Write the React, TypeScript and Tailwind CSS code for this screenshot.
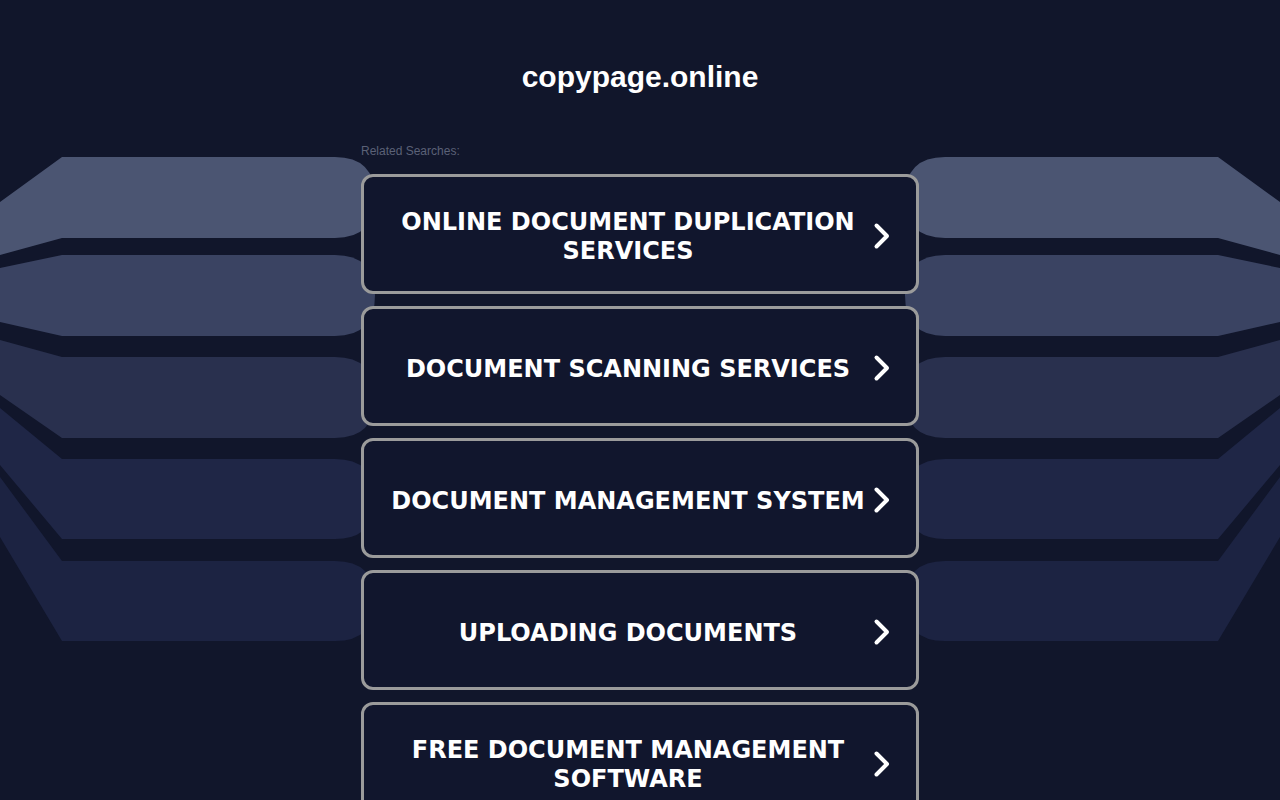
import React from "react";

const items: string[][] = [
  ["ONLINE DOCUMENT DUPLICATION", "SERVICES"],
  ["DOCUMENT SCANNING SERVICES"],
  ["DOCUMENT MANAGEMENT SYSTEM"],
  ["UPLOADING DOCUMENTS"],
  ["FREE DOCUMENT MANAGEMENT", "SOFTWARE"],
];

const bands = [
  { t0: 202, t1: 157, b1: 238, b0: 255, c: "#4b5572" },
  { t0: 268, t1: 255, b1: 336, b0: 322, c: "#3a4362" },
  { t0: 340, t1: 357, b1: 438, b0: 395, c: "#29304e" },
  { t0: 408, t1: 459, b1: 539, b0: 465, c: "#1f2646" },
  { t0: 477, t1: 561, b1: 641, b0: 537, c: "#1c2342" },
];

function bandPath(b: { t0: number; t1: number; b1: number; b0: number }) {
  const mid = (b.t1 + b.b1) / 2;
  return `M0 ${b.t0} L62 ${b.t1} L335 ${b.t1} Q375 ${b.t1} 375 ${mid} Q375 ${b.b1} 335 ${b.b1} L62 ${b.b1} L0 ${b.b0} Z`;
}

function Background() {
  return (
    <svg
      className="absolute inset-0 w-[1280px] h-[800px]"
      viewBox="0 0 1280 800"
      aria-hidden="true"
    >
      <g>
        {bands.map((b, i) => (
          <path key={i} d={bandPath(b)} fill={b.c} />
        ))}
      </g>
      <g transform="translate(1280,0) scale(-1,1)">
        {bands.map((b, i) => (
          <path key={i} d={bandPath(b)} fill={b.c} />
        ))}
      </g>
    </svg>
  );
}

function Chevron() {
  return (
    <svg width="20" height="28" viewBox="0 0 20 28" fill="none">
      <path
        d="M4.5 3.5 L15 14 L4.5 24.5"
        stroke="#ffffff"
        strokeWidth="4"
        strokeLinecap="round"
        strokeLinejoin="round"
      />
    </svg>
  );
}

export default function App() {
  return (
    <div className="relative h-screen w-full overflow-hidden bg-[#11162b]">
      <Background />
      <div className="relative z-10 flex flex-col items-center pt-[60px]">
        <h1 className="text-[30px] leading-[34px] font-bold text-white [font-family:'Liberation_Sans',Arial,sans-serif]">
          copypage.online
        </h1>
        <div className="w-[558px] mt-[50px]">
          <div className="text-[12px] leading-[14px] text-[#5b6177] [font-family:'Liberation_Sans',Arial,sans-serif] mb-[16px]">
            Related Searches:
          </div>
          <div className="flex flex-col gap-[12px]">
            {items.map((lines, i) => (
              <div
                key={i}
                className="flex items-center h-[120px] rounded-[12px] border-[3px] border-[#9b9b9b] bg-[#11162d]"
              >
                <div className="flex-1 pl-[26px] pt-[6px] text-center text-white font-bold text-[24px] leading-[29px] [font-family:'DejaVu_Sans',Verdana,sans-serif]">
                  {lines.map((l, j) => (
                    <div key={j}>{l}</div>
                  ))}
                </div>
                <div className="w-[32px] mr-[18px] pt-[3px] flex items-center justify-center">
                  <Chevron />
                </div>
              </div>
            ))}
          </div>
        </div>
      </div>
    </div>
  );
}
